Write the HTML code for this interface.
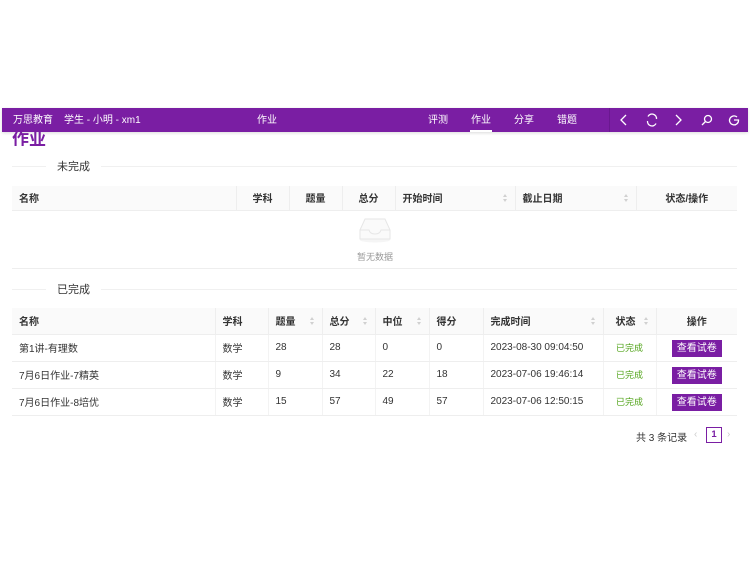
<!DOCTYPE html>
<html><head><meta charset="utf-8"><style>
*{margin:0;padding:0;box-sizing:border-box}
body{width:750px;height:562px;background:#fff;font-family:"Liberation Sans","Noto Sans CJK SC",sans-serif;position:relative;overflow:hidden;color:#333}
.abs{position:absolute}
.nav{left:2px;top:108px;width:746px;height:24px;background:#7a1ea3;color:#fff;font-size:10px;box-shadow:0 1px 3px rgba(0,0,0,.15)}
.nav span{position:absolute;top:6px;line-height:13px}
table{border-collapse:collapse;position:absolute;font-size:10px;color:#333}
td,th{border-bottom:1px solid #eee;text-align:left;padding-left:7px;font-weight:normal;position:relative}
th{background:#fafafa;border-right:1px solid #eee;font-weight:bold;color:#333}
.sort{position:absolute;right:6px;top:50%;margin-top:-4px;width:6px;height:8px}
.sort:before,.sort:after{content:"";position:absolute;left:0;border-left:2.5px solid transparent;border-right:2.5px solid transparent}
.sort:before{top:0;border-bottom:3px solid #d0d0d0}
.sort:after{bottom:0;border-top:3px solid #d0d0d0}
.btn{display:inline-block;background:#7a1ea3;color:#fff;font-size:10px;padding:2px 5px;line-height:13px;margin-top:2px}
.ok{color:#52a41a;font-size:9px}
td.c{border-right:1px solid #f3f3f3}
</style></head><body>
<div class="abs nav">
<span style="left:11px">万思教育</span>
<span style="left:62px">学生 - 小明 - xm1</span>
<span style="left:255px">作业</span>
<span style="left:426px">评测</span>
<span style="left:469px">作业</span>
<div class="abs" style="left:468px;top:22px;width:22px;height:2px;background:#fff"></div>
<span style="left:512px">分享</span>
<span style="left:555px">错题</span>
<div class="abs" style="left:607px;top:0;width:1px;height:24px;background:#6a1890"></div>
<svg class="abs" style="left:615px;top:5px" width="130" height="14" fill="none" stroke="#fff" stroke-width="1.3">
<path d="M9 2 L4 7 L9 12"/>
<path d="M31 3.5 A4.5 4.5 0 0 1 39.5 6 M39 10.5 A4.5 4.5 0 0 1 30.5 8"/>
<path d="M59 2 L64 7 L59 12"/>
<circle cx="91" cy="6" r="3.5"/><path d="M88.5 8.5 L85 12"/>
<path d="M120 4 A4.5 4.5 0 1 0 121.5 7 L117 7"/>
</svg>
</div>
<div class="abs" style="left:12px;top:132px;height:14px;overflow:hidden;width:40px"><div style="font-size:17px;font-weight:bold;color:#7a1ea3;margin-top:-7px">作业</div></div>
<div class="abs" style="left:12px;top:166px;width:725px;height:1px;background:#f0f0f0"></div>
<div class="abs" style="left:46px;top:158px;background:#fff;padding:0 11px;font-size:11px">未完成</div>
<table style="left:12px;top:186px;width:725px">
<tr style="height:24px"><th style="width:224px">名称</th><th style="width:53px;text-align:center;padding:0">学科</th><th style="width:53px;text-align:center;padding:0">题量</th><th style="width:53px;text-align:center;padding:0">总分</th><th style="width:120px">开始时间<i class="sort"></i></th><th style="width:121px">截止日期<i class="sort"></i></th><th style="text-align:center;padding:0;border-right:none">状态/操作</th></tr>
</table>
<div class="abs" style="left:12px;top:210px;width:725px;height:59px;border-bottom:1px solid #eee"></div>
<svg class="abs" style="left:358px;top:216px" width="34" height="28" fill="none" stroke="#e6e6e6" stroke-width="1">
<ellipse cx="17" cy="24" rx="15" ry="2.5" fill="#f5f5f5" stroke="none"/>
<path d="M2 14 L7 3 L27 3 L32 14 L32 23 L2 23 Z" fill="#fafafa"/>
<path d="M2 14 L11 14 Q12 18 17 18 Q22 18 23 14 L32 14"/>
</svg>
<div class="abs" style="left:357px;top:250px;font-size:9px;color:#999">暂无数据</div>
<div class="abs" style="left:12px;top:289px;width:725px;height:1px;background:#f0f0f0"></div>
<div class="abs" style="left:46px;top:281px;background:#fff;padding:0 11px;font-size:11px">已完成</div>
<table style="left:12px;top:308px;width:725px">
<tr style="height:26px"><th style="width:203px">名称</th><th style="width:53px">学科</th><th style="width:54px">题量<i class="sort"></i></th><th style="width:53px">总分<i class="sort"></i></th><th style="width:54px">中位<i class="sort"></i></th><th style="width:54px">得分</th><th style="width:120px">完成时间<i class="sort"></i></th><th style="width:53px;padding-left:12px">状态<i class="sort"></i></th><th style="text-align:center;padding:0;border-right:none">操作</th></tr>
<tr style="height:27px"><td class="c">第1讲-有理数</td><td class="c">数学</td><td class="c">28</td><td class="c">28</td><td class="c">0</td><td class="c">0</td><td class="c">2023-08-30 09:04:50</td><td class="c" style="text-align:center;padding:0"><span class="ok">已完成</span></td><td style="text-align:center;padding:0"><span class="btn">查看试卷</span></td></tr>
<tr style="height:27px"><td class="c">7月6日作业-7精英</td><td class="c">数学</td><td class="c">9</td><td class="c">34</td><td class="c">22</td><td class="c">18</td><td class="c">2023-07-06 19:46:14</td><td class="c" style="text-align:center;padding:0"><span class="ok">已完成</span></td><td style="text-align:center;padding:0"><span class="btn">查看试卷</span></td></tr>
<tr style="height:27px"><td class="c">7月6日作业-8培优</td><td class="c">数学</td><td class="c">15</td><td class="c">57</td><td class="c">49</td><td class="c">57</td><td class="c">2023-07-06 12:50:15</td><td class="c" style="text-align:center;padding:0"><span class="ok">已完成</span></td><td style="text-align:center;padding:0"><span class="btn">查看试卷</span></td></tr>
</table>
<div class="abs" style="left:636px;top:429px;font-size:10px">共 3 条记录</div>
<div class="abs" style="left:694px;top:429px;font-size:10px;color:#ccc">‹</div>
<div class="abs" style="left:706px;top:427px;width:16px;height:16px;border:1px solid #7a1ea3;color:#7a1ea3;font-size:9.5px;text-align:center;line-height:14px;font-weight:bold">1</div>
<div class="abs" style="left:727px;top:429px;font-size:10px;color:#ccc">›</div>
</body></html>
